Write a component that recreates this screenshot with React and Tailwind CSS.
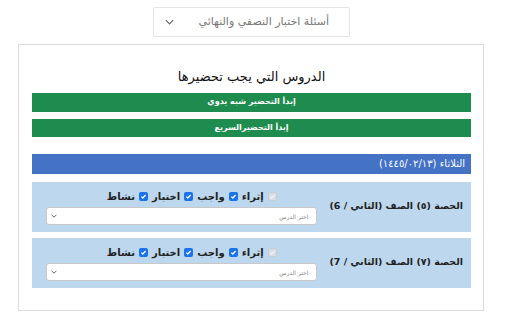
const ar = { fontFamily: '"DejaVu Sans", "Noto Sans", sans-serif' };

function Chevron({ className }) {
  return (
    <svg viewBox="0 0 10 6" className={className} fill="none" stroke="currentColor" strokeWidth="1.3">
      <path d="M1 1l4 4 4-4" />
    </svg>
  );
}

function Check({ disabled }) {
  return (
    <span
      className={`inline-flex shrink-0 w-[9px] h-[9px] items-center justify-center rounded-[2px] ${
        disabled ? 'bg-[#d7dde4] border border-[#c8ced6]' : 'bg-[#1a73e8]'
      }`}
    >
      <svg viewBox="0 0 10 10" className="w-[7px] h-[7px]" fill="none" stroke={disabled ? '#eef1f4' : '#fff'} strokeWidth="1.8">
        <path d="M2 5.2l2 2 4-4.4" />
      </svg>
    </span>
  );
}

function Lesson({ num, cls }) {
  return (
    <div className="flex items-center bg-[#bdd7ee] h-[50px] pr-[8px] pl-[14px] gap-[12px]">
      <div className="shrink-0 text-[9.5px] font-bold text-[#222] whitespace-nowrap">
        الحصة ({num}) الصف ({cls})
      </div>
      <div className="flex-1 flex flex-col items-stretch gap-[3px] pt-[1px]">
        <div className="flex items-center justify-center gap-[4px] text-[10px] font-bold text-[#222] pl-[20px]">
          <Check disabled />
          <span>إثراء</span>
          <Check />
          <span>واجب</span>
          <Check />
          <span>اختبار</span>
          <Check />
          <span>نشاط</span>
        </div>
        <div className="flex items-center justify-between h-[18px] bg-white border border-[#c9c9c9] rounded-[3px] pr-[8px] pl-[4px]">
          <span className="text-[6px] text-[#888]">اختر الدرس</span>
          <Chevron className="w-[6px] h-[4px] text-[#333]" />
        </div>
      </div>
    </div>
  );
}

export default function App() {
  return (
    <div dir="rtl" className="w-[512px] h-[320px] bg-white overflow-hidden pt-[7px]" style={ar}>
      {/* top select */}
      <div className="mr-[162px] w-[197px] h-[30px] border border-[#e3e3e3] rounded-[2px] flex items-center justify-between pr-[20px] pl-[11px]">
        <span className="text-[11px] text-[#777]">أسئلة اختبار النصفي والنهائي</span>
        <Chevron className="w-[9px] h-[6px] text-[#666]" />
      </div>

      {/* panel */}
      <div className="mt-[7px] mr-[28px] w-[466px] h-[267px] border border-[#dcdcdc] pt-[22px] pr-[12px] pl-[13px]">
        <h2 className="text-center text-[13px] text-[#111] mb-[6px]">الدروس التي يجب تحضيرها</h2>

        <div className="flex flex-col gap-[7px]">
          <div className="h-[19px] bg-[#1e8c4e] text-white text-[8px] font-bold flex items-center justify-center">
            إبدأ التحضير شبه يدوي
          </div>
          <div className="h-[18px] bg-[#1e8c4e] text-white text-[8px] font-bold flex items-center justify-center">
            إبدأ التحضيرالسريع
          </div>
        </div>

        <div className="mt-[17px] h-[20px] bg-[#4472c4] text-white text-[10px] flex items-center pr-[6px]">
          الثلاثاء (١٤٤٥/٠٢/١٣)
        </div>

        <div className="mt-[8px] flex flex-col gap-[6px]">
          <Lesson num="٥" cls="الثاني / 6" />
          <Lesson num="٧" cls="الثاني / 7" />
        </div>
      </div>
    </div>
  );
}
